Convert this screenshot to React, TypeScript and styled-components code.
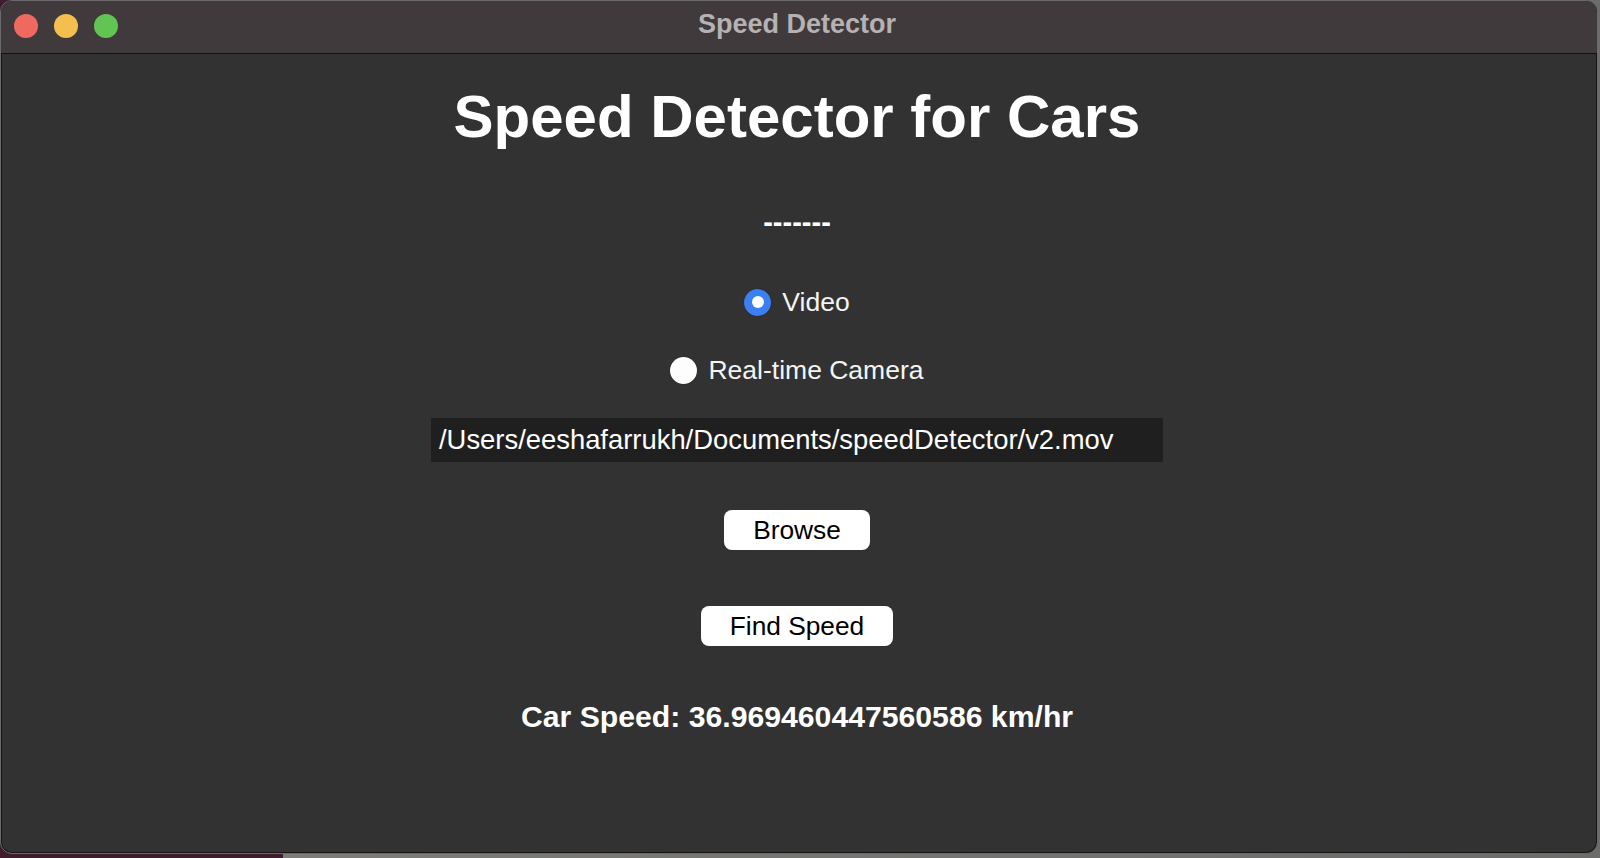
import React from 'react';
import styled, { createGlobalStyle } from 'styled-components';

const FONT = '"Liberation Sans", Arial, Helvetica, sans-serif';

const GlobalStyle = createGlobalStyle`
  html, body {
    margin: 0;
    padding: 0;
  }

  body {
    width: 1600px;
    height: 858px;
    overflow: hidden;
    background: linear-gradient(to right, #3f1c2e 0, #3f1c2e 283px, #7d7c76 283px, #6c6c6a 100%);
    font-family: ${FONT};
  }
`;

const Window = styled.div`
  width: 1596px;
  height: 852px;
  border: 1px solid #6a6a6a;
  border-radius: 12px;
  overflow: hidden;
  display: flex;
  flex-direction: column;
  background: #323232;
  box-shadow: inset 0 0 0 1px #151515;
`;

const TitleBar = styled.div`
  position: relative;
  height: 52px;
  flex: none;
  display: flex;
  align-items: center;
  justify-content: center;
  padding-right: 4px;
  background: #403a3c;
  border-bottom: 1px solid #121212;
`;

const Lights = styled.div`
  position: absolute;
  left: 13px;
  top: 13px;
  display: flex;
  gap: 16px;
`;

const Light = styled.span<{ color: string }>`
  width: 24px;
  height: 24px;
  border-radius: 50%;
  background: ${(props) => props.color};
`;

const WindowTitle = styled.div`
  font-family: ${FONT};
  font-weight: bold;
  font-size: 27px;
  color: #b6b1b3;
  padding-bottom: 6px;
`;

const Content = styled.main`
  flex: 1;
  display: flex;
  flex-direction: column;
  align-items: center;
  padding-right: 4px;
  color: #ffffff;
`;

const Heading = styled.h1`
  margin: 33px 0 0;
  font-size: 60px;
  line-height: 60px;
  font-weight: bold;
`;

const Dashes = styled.div`
  margin-top: 60px;
  font-size: 29px;
  line-height: 30px;
  font-weight: bold;
`;

const RadioRow = styled.label<{ gapAbove: number }>`
  margin-top: ${(props) => props.gapAbove}px;
  height: 28px;
  display: flex;
  align-items: center;
  gap: 11px;
  font-size: 26.5px;
  color: #f4f4f4;
`;

const RadioDot = styled.span<{ checked: boolean }>`
  width: 27px;
  height: 27px;
  box-sizing: border-box;
  border-radius: 50%;
  display: flex;
  align-items: center;
  justify-content: center;
  background: ${(props) => (props.checked ? '#3b7ff2' : '#fdfdfd')};
  box-shadow: 0 0 1px rgba(0, 0, 0, 0.6);

  &::after {
    content: '';
    display: ${(props) => (props.checked ? 'block' : 'none')};
    width: 12px;
    height: 12px;
    border-radius: 50%;
    background: #ffffff;
  }
`;

const PathField = styled.div`
  margin-top: 34px;
  width: 732px;
  height: 44px;
  box-sizing: border-box;
  padding-left: 8px;
  display: flex;
  align-items: center;
  background: #1f1f1f;
  font-size: 27.4px;
  color: #ffffff;
  white-space: nowrap;
`;

const Button = styled.button<{ gapAbove: number }>`
  margin-top: ${(props) => props.gapAbove}px;
  height: 40px;
  padding: 0 29px;
  border: none;
  border-radius: 8px;
  background: #ffffff;
  color: #000000;
  font-family: ${FONT};
  font-size: 26.3px;
  line-height: 40px;
  cursor: pointer;
`;

const Result = styled.div`
  margin-top: 56px;
  font-size: 30.2px;
  line-height: 30px;
  font-weight: bold;
`;

function RadioOption({ label, checked, gapAbove }: { label: string; checked: boolean; gapAbove: number }) {
  return (
    <RadioRow gapAbove={gapAbove}>
      <RadioDot checked={checked} />
      {label}
    </RadioRow>
  );
}

export default function App() {
  return (
    <>
      <GlobalStyle />
      <Window>
        <TitleBar>
          <Lights>
            <Light color="#ee6a5f" />
            <Light color="#f5bf4f" />
            <Light color="#61c554" />
          </Lights>
          <WindowTitle>Speed Detector</WindowTitle>
        </TitleBar>
        <Content>
          <Heading>Speed Detector for Cars</Heading>
          <Dashes>-------</Dashes>
          <RadioOption label="Video" checked gapAbove={51} />
          <RadioOption label="Real-time Camera" checked={false} gapAbove={40} />
          <PathField>/Users/eeshafarrukh/Documents/speedDetector/v2.mov</PathField>
          <Button gapAbove={48}>Browse</Button>
          <Button gapAbove={56}>Find Speed</Button>
          <Result>Car Speed: 36.969460447560586 km/hr</Result>
        </Content>
      </Window>
    </>
  );
}
